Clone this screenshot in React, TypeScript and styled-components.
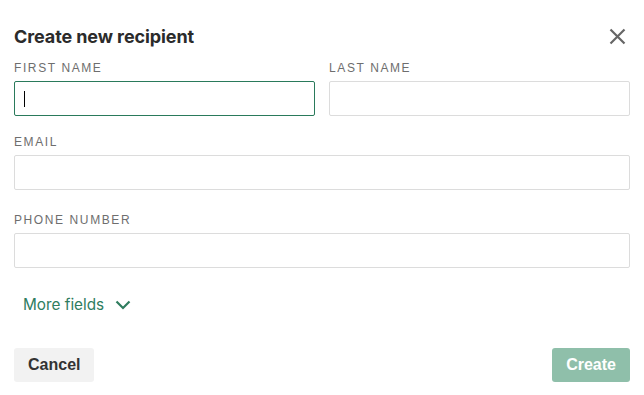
import React from "react";
import styled, { createGlobalStyle } from "styled-components";

const GlobalStyle = createGlobalStyle`
  html, body {
    margin: 0;
    padding: 0;
    background: #ffffff;
    font-family: Inter, "Liberation Sans", Arial, sans-serif;
  }
  * { box-sizing: border-box; }
`;

const Dialog = styled.div`
  width: 644px;
  height: 395px;
  padding: 24px 14px 0 14px;
  display: flex;
  flex-direction: column;
  background: #fff;
`;

const Header = styled.div`
  display: flex;
  align-items: center;
  justify-content: space-between;
  height: 24px;
`;

const Title = styled.h2`
  margin: 0;
  font-size: 18px;
  font-weight: 700;
  color: #2b2b2b;
  letter-spacing: -0.1px;
`;

const CloseButton = styled.button`
  border: none;
  background: none;
  padding: 0;
  margin-right: 1px;
  width: 24px;
  height: 24px;
  display: flex;
  align-items: center;
  justify-content: center;
  cursor: pointer;
`;

const Row = styled.div`
  display: grid;
  grid-template-columns: 1fr 1fr;
  gap: 14px;
`;

const Field = styled.div<{ $top: number }>`
  display: flex;
  flex-direction: column;
  margin-top: ${(p) => p.$top}px;
`;

const Label = styled.label`
  font-family: "Liberation Sans", Arial, sans-serif;
  font-size: 12px;
  line-height: 16px;
  letter-spacing: 1.6px;
  color: #6e6e6e;
  margin-bottom: 5px;
`;

const Input = styled.input<{ $focused?: boolean }>`
  height: 35px;
  width: 100%;
  border: 1px solid ${(p) => (p.$focused ? "#2a7a5b" : "#dcdcdc")};
  border-radius: 2px;
  padding: 0 9px;
  font-size: 15px;
  outline: none;
  background: #fff;
`;

const Caret = styled.span`
  position: absolute;
  left: 10px;
  top: 10px;
  width: 1px;
  height: 16px;
  background: #000;
`;

const InputWrap = styled.div`
  position: relative;
`;

const MoreFields = styled.button`
  margin-top: 27px;
  margin-left: 9px;
  align-self: flex-start;
  display: flex;
  align-items: center;
  gap: 11px;
  border: none;
  background: none;
  padding: 0;
  font-family: Inter, "Liberation Sans", Arial, sans-serif;
  font-size: 15.3px;
  color: #2f7d5f;
  cursor: pointer;
`;

const Footer = styled.div`
  margin-top: 34px;
  display: flex;
  justify-content: space-between;
`;

const Button = styled.button<{ $primary?: boolean }>`
  height: 34px;
  padding: 0 14px;
  border: none;
  border-radius: 3px;
  font-family: "Liberation Sans", Arial, sans-serif;
  font-weight: 700;
  font-size: 16px;
  color: ${(p) => (p.$primary ? "#ffffff" : "#333333")};
  background: ${(p) => (p.$primary ? "#8fbfaa" : "#f2f2f2")};
  cursor: pointer;
`;

export default function App() {
  return (
    <>
      <GlobalStyle />
      <Dialog>
        <Header>
          <Title>Create new recipient</Title>
          <CloseButton aria-label="Close">
            <svg width="17" height="17" viewBox="0 0 17 17">
              <path d="M1.5 1.5 L15.5 15.5 M15.5 1.5 L1.5 15.5" stroke="#666" strokeWidth="2.2" strokeLinecap="butt" />
            </svg>
          </CloseButton>
        </Header>
        <Row>
          <Field $top={12}>
            <Label>FIRST NAME</Label>
            <InputWrap>
              <Input $focused />
              <Caret />
            </InputWrap>
          </Field>
          <Field $top={12}>
            <Label>LAST NAME</Label>
            <Input />
          </Field>
        </Row>
        <Field $top={18}>
          <Label>EMAIL</Label>
          <Input />
        </Field>
        <Field $top={22}>
          <Label>PHONE NUMBER</Label>
          <Input />
        </Field>
        <MoreFields>
          More fields
          <svg width="16" height="10" viewBox="0 0 16 10">
            <path d="M1.5 1.5 L8 8 L14.5 1.5" stroke="#2f7d5f" strokeWidth="2.2" fill="none" />
          </svg>
        </MoreFields>
        <Footer>
          <Button>Cancel</Button>
          <Button $primary>Create</Button>
        </Footer>
      </Dialog>
    </>
  );
}
